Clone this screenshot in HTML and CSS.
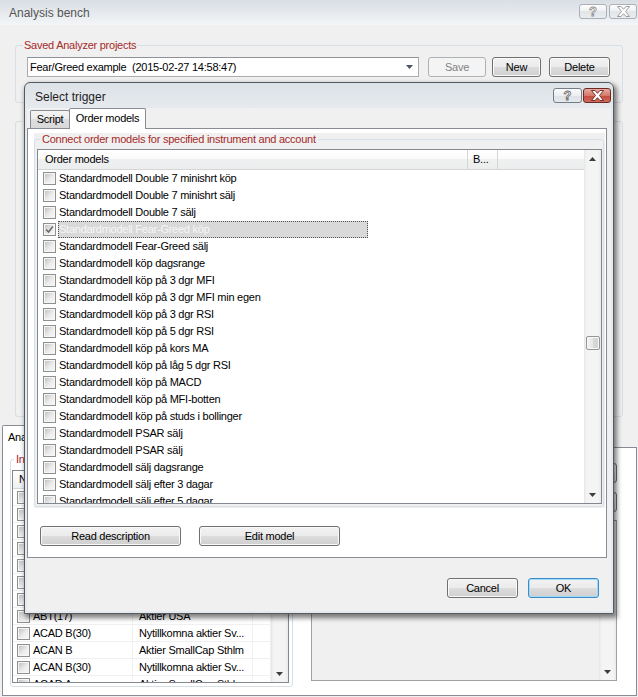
FILE: index.html
```html
<!DOCTYPE html>
<html>
<head>
<meta charset="utf-8">
<title>Analysis bench</title>
<link rel="stylesheet" href="styles.css">
</head>
<body>
<div class="win">
  <div class="titlebar">
    <span class="title">Analysis bench</span>
    <div class="capbtns">
      <span class="capbtn"><span class="qmark">?</span></span>
      <span class="capbtn"><svg class="xicon" viewBox="0 0 13 11" width="13" height="11"><polygon points="0.5,0.5 4,0.5 6.5,3.3 9,0.5 12.5,0.5 8.5,5.5 12.5,10.5 9,10.5 6.5,7.7 4,10.5 0.5,10.5 4.5,5.5"/></svg></span>
    </div>
  </div>

  <fieldset class="grp saved">
    <legend>Saved Analyzer projects</legend>
    <div class="saved-row">
      <div class="combo"><span class="combo-text">Fear/Greed example  (2015-02-27 14:58:47)</span><svg class="combo-arrow" width="7" height="4" viewBox="0 0 7 4"><polygon points="0,0 7,0 3.5,4"/></svg></div>
      <span class="btn disabled save">Save</span>
      <span class="btn new">New</span>
      <span class="btn del">Delete</span>
    </div>
  </fieldset>

  <fieldset class="grp settings">
    <legend>Analyzer settings</legend>
    <div class="settings-fill"></div>
  </fieldset>

  <div class="otabs"><span class="otab">Analyzer</span></div>
  <div class="opanel">
    <fieldset class="grp instr">
      <legend>Instruments</legend>
      <div class="olist">
        <div class="olist-main">
          <div class="ohead"><span class="oh c1">Name</span><span class="oh c2">List</span><span class="oh c3"></span></div>
          <div class="orow"><span class="oc c1"><span class="cb"></span><span class="otext">AAK(30)</span></span><span class="oc c2">Large Cap Sthlm</span><span class="oc c3"></span></div>
          <div class="orow"><span class="oc c1"><span class="cb"></span><span class="otext">AAPL(17)</span></span><span class="oc c2">Aktier USA</span><span class="oc c3"></span></div>
          <div class="orow"><span class="oc c1"><span class="cb"></span><span class="otext">ABB</span></span><span class="oc c2">Large Cap Sthlm</span><span class="oc c3"></span></div>
          <div class="orow"><span class="oc c1"><span class="cb"></span><span class="otext">ABB(30)</span></span><span class="oc c2">Large Cap Sthlm</span><span class="oc c3"></span></div>
          <div class="orow"><span class="oc c1"><span class="cb"></span><span class="otext">ABBV(17)</span></span><span class="oc c2">Aktier USA</span><span class="oc c3"></span></div>
          <div class="orow"><span class="oc c1"><span class="cb"></span><span class="otext">ABG</span></span><span class="oc c2">Aktier SmallCap Sthlm</span><span class="oc c3"></span></div>
          <div class="orow"><span class="oc c1"><span class="cb"></span><span class="otext">ABG(30)</span></span><span class="oc c2">Aktier SmallCap Sthlm</span><span class="oc c3"></span></div>
          <div class="orow"><span class="oc c1"><span class="cb"></span><span class="otext">ABT(17)</span></span><span class="oc c2">Aktier USA</span><span class="oc c3"></span></div>
          <div class="orow"><span class="oc c1"><span class="cb"></span><span class="otext">ACAD B(30)</span></span><span class="oc c2">Nytillkomna aktier Sv...</span><span class="oc c3"></span></div>
          <div class="orow"><span class="oc c1"><span class="cb"></span><span class="otext">ACAN B</span></span><span class="oc c2">Aktier SmallCap Sthlm</span><span class="oc c3"></span></div>
          <div class="orow"><span class="oc c1"><span class="cb"></span><span class="otext">ACAN B(30)</span></span><span class="oc c2">Nytillkomna aktier Sv...</span><span class="oc c3"></span></div>
          <div class="orow"><span class="oc c1"><span class="cb"></span><span class="otext">ACAD A</span></span><span class="oc c2">Aktier SmallCap Sthlm</span><span class="oc c3"></span></div>
        </div>
        <div class="vscroll">
          <span class="sarrow"><svg width="7" height="4" viewBox="0 0 7 4"><polygon points="0,4 7,4 3.5,0"/></svg></span>
          <span class="strack"></span>
          <span class="sarrow"><svg width="7" height="4" viewBox="0 0 7 4"><polygon points="0,0 7,0 3.5,4"/></svg></span>
        </div>
      </div>
    </fieldset>
    <div class="oright">
      <span class="btn obtn">Add</span>
      <span class="btn obtn second">Remove</span>
      <div class="obox">
        <div class="obox-fill"></div>
        <div class="vscroll">
          <span class="sarrow"><svg width="7" height="4" viewBox="0 0 7 4"><polygon points="0,4 7,4 3.5,0"/></svg></span>
          <span class="strack"></span>
          <span class="sarrow"><svg width="7" height="4" viewBox="0 0 7 4"><polygon points="0,0 7,0 3.5,4"/></svg></span>
        </div>
      </div>
    </div>
  </div>
</div>

<div class="dialog">
  <div class="dtitle">
    <span class="dtitle-text">Select trigger</span>
    <div class="dcap">
      <span class="dcapbtn help"><span class="qmark dark">?</span></span>
      <span class="dcapbtn close"><svg class="xicon red" viewBox="0 0 13 11" width="13" height="11"><polygon points="0.5,0.5 4,0.5 6.5,3.3 9,0.5 12.5,0.5 8.5,5.5 12.5,10.5 9,10.5 6.5,7.7 4,10.5 0.5,10.5 4.5,5.5"/></svg></span>
    </div>
  </div>
  <div class="dbody">
    <div class="tabstrip"><span class="tab">Script</span><span class="tab active">Order models</span></div>
    <div class="tpanel">
      <div class="grpwrap">
        <fieldset class="grp conn">
          <legend>Connect order models for specified instrument and account</legend>
          <div class="mlist">
            <div class="mlist-main">
              <div class="mhead"><span class="mh h1">Order models</span><span class="mh h2">B...</span><span class="mh h3"></span></div>
              <div class="mrows">
                <div class="mrow"><span class="cb"></span><span class="lbl">Standardmodell Double 7 minishrt köp</span></div>
                <div class="mrow"><span class="cb"></span><span class="lbl">Standardmodell Double 7 minishrt sälj</span></div>
                <div class="mrow"><span class="cb"></span><span class="lbl">Standardmodell Double 7 sälj</span></div>
                <div class="mrow"><span class="cb checked"><svg width="9" height="9" viewBox="0 0 9 9"><path d="M1.2 4.6 L3.6 7 L7.8 1.4"/></svg></span><span class="lbl selected">Standardmodell Fear-Greed köp</span></div>
                <div class="mrow"><span class="cb"></span><span class="lbl">Standardmodell Fear-Greed sälj</span></div>
                <div class="mrow"><span class="cb"></span><span class="lbl">Standardmodell köp dagsrange</span></div>
                <div class="mrow"><span class="cb"></span><span class="lbl">Standardmodell köp på 3 dgr MFI</span></div>
                <div class="mrow"><span class="cb"></span><span class="lbl">Standardmodell köp på 3 dgr MFI min egen</span></div>
                <div class="mrow"><span class="cb"></span><span class="lbl">Standardmodell köp på 3 dgr RSI</span></div>
                <div class="mrow"><span class="cb"></span><span class="lbl">Standardmodell köp på 5 dgr RSI</span></div>
                <div class="mrow"><span class="cb"></span><span class="lbl">Standardmodell köp på kors MA</span></div>
                <div class="mrow"><span class="cb"></span><span class="lbl">Standardmodell köp på låg 5 dgr RSI</span></div>
                <div class="mrow"><span class="cb"></span><span class="lbl">Standardmodell köp på MACD</span></div>
                <div class="mrow"><span class="cb"></span><span class="lbl">Standardmodell köp på MFI-botten</span></div>
                <div class="mrow"><span class="cb"></span><span class="lbl">Standardmodell köp på studs i bollinger</span></div>
                <div class="mrow"><span class="cb"></span><span class="lbl">Standardmodell PSAR sälj</span></div>
                <div class="mrow"><span class="cb"></span><span class="lbl">Standardmodell PSAR sälj</span></div>
                <div class="mrow"><span class="cb"></span><span class="lbl">Standardmodell sälj dagsrange</span></div>
                <div class="mrow"><span class="cb"></span><span class="lbl">Standardmodell sälj efter 3 dagar</span></div>
                <div class="mrow"><span class="cb"></span><span class="lbl">Standardmodell sälj efter 5 dagar</span></div>
              </div>
            </div>
            <div class="vscroll">
              <span class="sarrow"><svg width="7" height="4" viewBox="0 0 7 4"><polygon points="0,4 7,4 3.5,0"/></svg></span>
              <span class="strack"><span class="thumb"></span></span>
              <span class="sarrow"><svg width="7" height="4" viewBox="0 0 7 4"><polygon points="0,0 7,0 3.5,4"/></svg></span>
            </div>
          </div>
        </fieldset>
      </div>
      <div class="pbtns"><span class="btn pbtn">Read description</span><span class="btn pbtn">Edit model</span></div>
    </div>
    <div class="dfoot"><span class="btn fbtn">Cancel</span><span class="btn fbtn ok">OK</span></div>
  </div>
</div>
</body>
</html>
```

FILE: styles.css
```css
* { box-sizing: border-box; }
html, body { margin: 0; padding: 0; }
body {
  width: 638px; height: 697px; overflow: hidden; position: relative;
  background: #f0f0f0;
  font-family: "Liberation Sans", Arial, sans-serif;
  font-size: 11px; letter-spacing: -0.25px; color: #000;
}
.win { width: 638px; height: 697px; background: #f0f0f0; display: flex; flex-direction: column; }

/* outer title bar */
.titlebar { height: 25px; flex: none; display: flex; align-items: flex-start; background: linear-gradient(#d9dee4, #f3f5f7); }
.title { flex: 1; margin: 6px 0 0 9px; font-size: 12px; line-height: 15px; letter-spacing: 0; color: #555; }
.capbtns { display: flex; gap: 2px; margin: 4px 1px 0 0; }
.capbtn {
  width: 28px; height: 15px; border: 1px solid #a9b0b8; border-radius: 3px;
  background: linear-gradient(#fdfdfd, #eef0f2 50%, #e3e6e9 50%, #eaedf0);
  display: flex; align-items: center; justify-content: center;
}
.qmark { font: bold 13px/13px "Liberation Sans", Arial, sans-serif; letter-spacing: 0; color: #fff; -webkit-text-stroke: 0.8px #8f8f8f; }
.qmark.dark { -webkit-text-stroke: 0.8px #6a6a6a; }
.xicon polygon { fill: #fff; stroke: #929292; stroke-width: 0.9; }
.xicon.red polygon { fill: #fff; stroke: #6a241c; stroke-width: 0.9; }

/* group boxes */
.grp { border: 1px solid #d5dfe5; border-radius: 3px; padding: 0; margin: 0; min-width: 0; }
.grp legend { color: #a52a2a; font-size: 11px; line-height: 13px; padding: 0 1px; }

.saved { margin: 14px 15px 0 15px; padding: 5px 0 25px 7px; }
.saved-row { display: flex; margin-left: 4px; height: 20px; }
.combo {
  width: 392px; height: 20px; border: 1px solid #abadb3; border-top-color: #8e9297; background: #fff;
  display: flex; align-items: center; padding-left: 2px;
}
.combo-text { flex: 1; white-space: pre; line-height: 14px; }
.combo-arrow { margin-right: 5px; fill: #4c5563; }

.btn {
  height: 20px; border: 1px solid #707070; border-radius: 3px;
  background: linear-gradient(#f2f2f2 0%, #ebebeb 50%, #dddddd 50%, #cfcfcf 100%);
  box-shadow: inset 0 0 0 1px #fafafa;
  display: flex; align-items: center; justify-content: center; line-height: 14px; flex: none;
}
.btn.disabled { border-color: #adb2b5; background: #f4f4f4; box-shadow: none; color: #838383; }
.save { width: 58px; margin-left: 9px; }
.new { width: 49px; margin-left: 6px; }
.del { width: 61px; margin-left: 8px; }

.settings { margin: 12px 15px 0 15px; }
.settings legend { margin-left: 7px; }
.settings-fill { height: 288px; }

/* background tab control */
.otabs { height: 22px; margin-top: 8px; padding-left: 2px; display: flex; align-items: flex-end; flex: none; position: relative; z-index: 1; }
.otab {
  width: 70px; height: 23px; margin-bottom: -1px;
  border: 1px solid #898c95; border-bottom: none; border-radius: 2px 2px 0 0; background: #fff;
  padding: 4px 0 0 5px; line-height: 14px;
}
.opanel { margin-left: 2px; width: 635px; height: 249px; border: 1px solid #898c95; background: #fff; display: flex; align-items: flex-start; flex: none; }
.instr { margin: 5px 0 0 7px; padding: 4px 3px 3px 1px; }
.instr legend { margin-left: 2px; padding: 0 2px; }
.olist { width: 277px; height: 213px; border: 1px solid #828790; display: flex; background: #fff; overflow: hidden; }
.olist-main { flex: 1; overflow: hidden; }
.ohead { height: 18px; display: flex; background: linear-gradient(#ffffff, #f7f8f9 50%, #eff0f2 100%); border-bottom: 1px solid #d5d5d5; }
.oh { border-right: 1px solid #e0e0e0; padding-left: 6px; line-height: 17px; overflow: hidden; white-space: nowrap; }
.c1 { width: 120px; flex: none; }
.c2 { width: 120px; flex: none; }
.c3 { width: 18px; flex: none; }
.orow { height: 17px; display: flex; }
.oc { border-right: 1px solid #f0f0f0; border-bottom: 1px solid #f0f0f0; display: flex; align-items: center; white-space: nowrap; overflow: hidden; }
.oc.c1 { padding-left: 4px; }
.oc.c2 { padding-left: 6px; }
.otext { margin-left: 3px; }

.oright { margin-left: 18px; width: 306px; display: flex; flex-direction: column; align-items: flex-end; }
.obtn { width: 100px; margin-top: 15px; }
.obtn.second { margin-top: 9px; }
.obox { width: 306px; height: 161px; margin-top: 8px; border: 1px solid #a0a0a0; border-top-color: #8f8f8f; background: #f0f0f0; display: flex; }
.obox-fill { flex: 1; }

/* scrollbars */
.vscroll {
  width: 17px; flex: none; display: flex; flex-direction: column;
  background: linear-gradient(90deg, #e3e3e3 0, #ededed 1px, #f4f4f4 3px, #f4f4f4 14px, #eaeaea 100%);
}
.sarrow { height: 17px; flex: none; display: flex; align-items: center; justify-content: center; }
.sarrow svg { fill: #3d3d3d; }
.strack { flex: 1; }
.thumb {
  display: block; width: 14px; height: 14px; margin: 169px 0 0 2px;
  border: 1px solid #959595; border-radius: 2px;
  background: linear-gradient(90deg, #f3f3f3, #e7e7e7 50%, #d8d8d8 50%, #d2d2d2);
  box-shadow: inset 0 0 0 1px #f8f8f8;
}

/* checkboxes */
.cb {
  width: 13px; height: 13px; flex: none; border: 1px solid #8e8f8f;
  background: linear-gradient(135deg, #b9b9b9 0%, #d6d6d6 30%, #ececec 55%, #f8f8f8 100%);
  box-shadow: inset 0 0 0 1px #f6f6f6;
  display: flex; align-items: center; justify-content: center;
}
.cb svg path { fill: none; stroke: #6e6e6e; stroke-width: 1.7; }

/* dialog (window floating over the bench) */
.dialog {
  position: absolute; left: 24px; top: 82px; width: 590px; height: 532px; z-index: 10;
  border: 1px solid #555a61; border-radius: 6px 6px 0 0;
  background: linear-gradient(#dde2e8, #e6eaee 24px, #e6eaee);
  padding: 0 2px 2px 2px;
  box-shadow: 2px 3px 5px 1px rgba(0, 0, 0, 0.5);
  display: flex; flex-direction: column;
}
.dtitle { height: 25px; flex: none; display: flex; align-items: flex-start; }
.dtitle-text { flex: 1; margin: 7px 0 0 8px; font-size: 12px; line-height: 15px; letter-spacing: 0; color: #1e1e1e; }
.dcap { display: flex; gap: 1px; margin-top: 5px; }
.dcapbtn { height: 15px; border-radius: 3px; display: flex; align-items: center; justify-content: center; }
.dcapbtn.help { width: 29px; border: 1px solid #737c86; background: linear-gradient(#fafbfc, #eceef1 50%, #dde1e5 50%, #e6e9ec); }
.dcapbtn.close { width: 28px; border: 1px solid #6b2a24; background: linear-gradient(#e8a99f, #d7796c 50%, #c34a3c 50%, #cf6a5c); }

.dbody { flex: 1; background: #f0f0f0; display: flex; flex-direction: column; }
.tabstrip { height: 20px; flex: none; display: flex; align-items: flex-end; padding-left: 3px; }
.tab {
  width: 40px; height: 18px; border: 1px solid #898c95; border-bottom: none; border-radius: 2px 2px 0 0;
  background: linear-gradient(#f3f3f3, #ebebeb 50%, #dddddd 50%, #d9d9d9);
  text-align: center; line-height: 16px;
}
.tab.active { width: 77px; height: 21px; margin-left: -1px; margin-bottom: -1px; background: #fff; position: relative; z-index: 1; line-height: 19px; }
.tpanel { height: 430px; margin-right: 4px; border: 1px solid #898c95; background: #fff; flex: none; }
.grpwrap { width: 571px; height: 375px; margin: 4px 0 0 6px; background: #f0f0f0; }
.conn { margin-right: 1px; padding: 3px 1px 2px 2px; }
.conn legend { margin-left: 3px; padding: 0 2px; }
.mlist { height: 355px; border: 1px solid #828790; background: #fff; display: flex; }
.mlist-main { flex: 1; overflow: hidden; display: flex; flex-direction: column; }
.mhead { height: 20px; flex: none; display: flex; background: linear-gradient(#ffffff, #fafafa 50%, #eff0f1 50%, #eceded); border-bottom: 1px solid #d5d5d5; }
.mh { border-right: 1px solid #d5d5d5; line-height: 19px; white-space: nowrap; overflow: hidden; }
.h1 { width: 430px; padding-left: 7px; }
.h2 { width: 30px; padding-left: 5px; }
.h3 { flex: 1; border-right: none; }
.mrows { flex: 1; overflow: hidden; }
.mrow { height: 17px; display: flex; align-items: center; padding-left: 5px; white-space: nowrap; }
.lbl { margin-left: 2px; padding-left: 1px; height: 17px; line-height: 17px; }
.lbl.selected { width: 310px; background: #d9d9d9; color: #f7f7f7; outline: 1px dotted #505050; outline-offset: -1px; }

.pbtns { display: flex; gap: 18px; padding: 18px 0 0 12px; }
.pbtn { width: 141px; }
.dfoot { display: flex; justify-content: flex-end; gap: 10px; padding: 20px 12px 0 0; }
.fbtn { width: 71px; }
.fbtn.ok { border-color: #3c8ccc; box-shadow: inset 0 0 0 1px #9fdcf8; }
```
